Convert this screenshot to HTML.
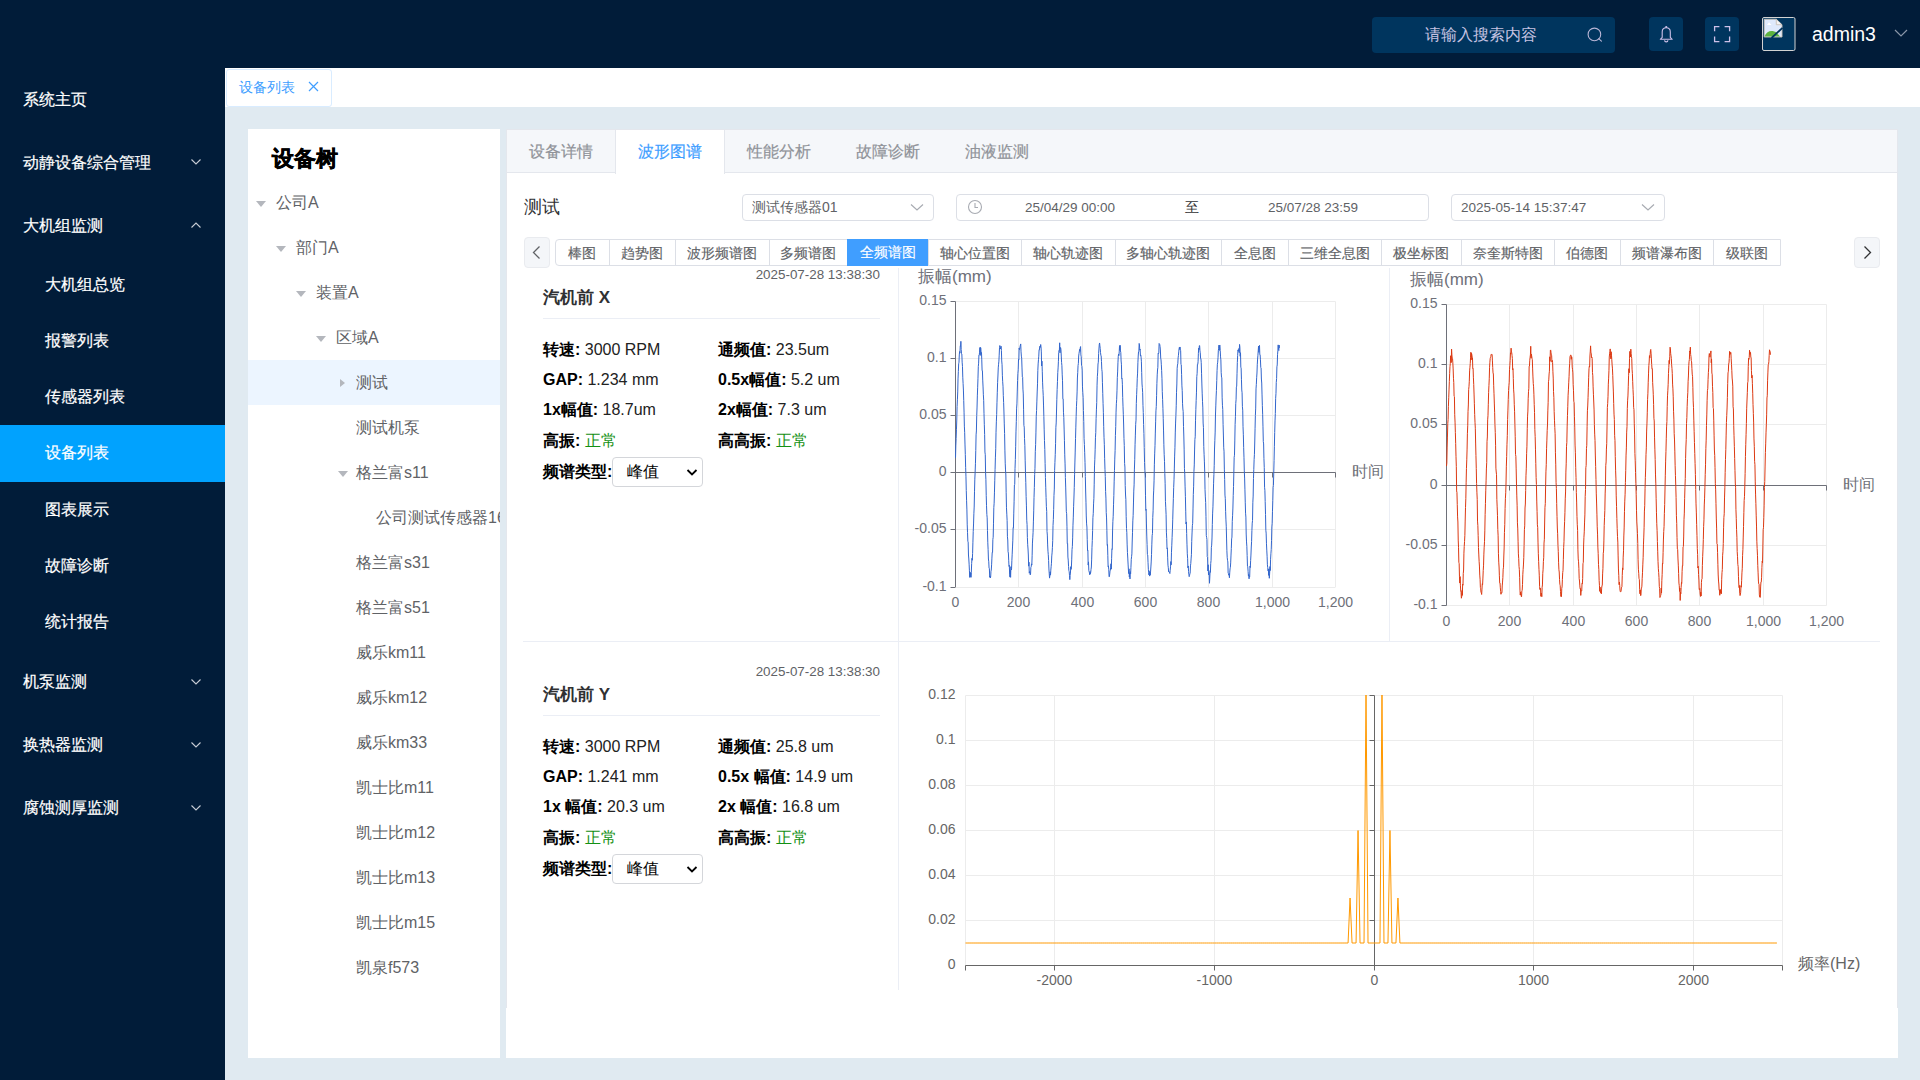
<!DOCTYPE html>
<html><head><meta charset="utf-8">
<style>
*{box-sizing:border-box;margin:0;padding:0}
html,body{width:1920px;height:1080px;overflow:hidden}
body{font-family:"Liberation Sans",sans-serif;background:#e0eaf1;position:relative;color:#303133}
.abs{position:absolute}
#hdr{left:0;top:0;width:1920px;height:68px;background:#011c39}
#side{left:0;top:68px;width:225px;height:1012px;background:#011c39}
.mi{position:absolute;left:23px;color:#fff;font-size:16px;line-height:20px;white-space:nowrap;-webkit-text-stroke:0.2px #fff}
.sub{left:45px}
.act{position:absolute;left:0;top:357px;width:225px;height:57px;background:#01a2fe}
.chev{position:absolute;left:191px;width:10px;height:6px}
#tagbar{left:225px;top:68px;width:1695px;height:39px;background:#fff}
#tree{left:248px;top:129px;width:252px;height:929px;background:#fff;overflow:hidden}
#main{left:506px;top:129px;width:1392px;height:929px;background:#fff;border:1px solid #e4e7ed}
.tn{position:absolute;font-size:16px;color:#606266;white-space:nowrap;line-height:20px}
.car{position:absolute;width:0;height:0}
.cd{border-left:5px solid transparent;border-right:5px solid transparent;border-top:6px solid #b4b7bd}
.cr{border-top:4px solid transparent;border-bottom:4px solid transparent;border-left:5px solid #b4b7bd}
</style></head><body>
<div id="hdr" class="abs">
  <div class="abs" style="left:1372px;top:17px;width:243px;height:36px;background:#00355e;border-radius:4px"></div>
  <div class="abs" style="left:1372px;top:17px;width:218px;height:35px;line-height:35px;text-align:center;color:#c6c3e2;font-size:16px">请输入搜索内容</div>
  <svg class="abs" style="left:1586px;top:26px" width="18" height="18" viewBox="0 0 18 18"><circle cx="8.4" cy="8.4" r="6.3" fill="none" stroke="#b9b6d6" stroke-width="1.1"/><path d="M12.8 12.6 L15.4 15.1" stroke="#b9b6d6" stroke-width="1.1" stroke-linecap="round"/></svg>
  <div class="abs" style="left:1649px;top:17px;width:34px;height:34px;background:#00355e;border-radius:4px"></div>
  <svg class="abs" style="left:1649px;top:17px" width="34" height="34" viewBox="0 0 34 34"><path d="M13.2 20.4 V14.9 C13.2 12.4 15 10.8 17.25 10.8 C19.5 10.8 21.3 12.4 21.3 14.9 V20.4 L23.2 22.3 H11.3 Z" fill="none" stroke="#cdc0e8" stroke-width="1.1" stroke-linejoin="round"/><circle cx="17.25" cy="10" r="1.1" fill="#cdc0e8"/><path d="M15.6 23.2 A1.65 1.65 0 0 0 18.9 23.2" fill="none" stroke="#cdc0e8" stroke-width="1.1"/></svg>
  <div class="abs" style="left:1705px;top:17px;width:34px;height:34px;background:#00355e;border-radius:4px"></div>
  <svg class="abs" style="left:1704px;top:16px" width="36" height="36" viewBox="0 0 36 36"><path d="M10.6 15.3 V10.6 H15.4 M20.6 10.6 H25.6 V15.3 M25.6 20.6 V25.6 H20.6 M15.4 25.6 H10.6 V20.6" fill="none" stroke="#cdc0e8" stroke-width="1.3"/></svg>
  <svg class="abs" style="left:1762px;top:17px" width="34" height="34" viewBox="0 0 34 34"><rect x="0.5" y="0.5" width="32.5" height="33" rx="1.5" fill="#00355e" stroke="#d2d2d2" stroke-width="1"/><path d="M2.2 2.2 H14.3 L20 7.7 V20 H2.2 Z" fill="#dfe9fb" stroke="#c8bfb6" stroke-width="0.9"/><path d="M5 8 L7 5.2 L9.5 8 Z" fill="#fff"/><path d="M2.6 19.6 C4 14 10 12.5 14.5 15.5 L18 19.6 Z" fill="#5db33f"/><path d="M14.3 2.4 V7.7 H19.8" fill="#f4f4f4" stroke="#c8bfb6" stroke-width="0.9"/><path d="M9.5 21 L20.5 10.8" stroke="#00355e" stroke-width="1.8"/></svg>
  <div class="abs" style="left:1812px;top:22px;color:#fff;font-size:19.5px;line-height:24px">admin3</div>
  <svg class="abs" style="left:1894px;top:29px" width="14" height="9" viewBox="0 0 14 9"><path d="M1 1 L7 7 L13 1" fill="none" stroke="#8a96a8" stroke-width="1.2"/></svg>
</div>
<div id="side" class="abs">
  <div class="act"></div>
  <div class="mi" style="top:22px">系统主页</div>
  <div class="mi" style="top:85px">动静设备综合管理</div>
  <svg class="chev" style="top:91px" viewBox="0 0 10 6"><path d="M0.5 0.5 L5 5 L9.5 0.5" fill="none" stroke="#c8cdd5" stroke-width="1.1"/></svg>
  <div class="mi" style="top:148px">大机组监测</div>
  <svg class="chev" style="top:153.5px" viewBox="0 0 10 6"><path d="M0.5 5.5 L5 1 L9.5 5.5" fill="none" stroke="#c8cdd5" stroke-width="1.1"/></svg>
  <div class="mi sub" style="top:207px">大机组总览</div>
  <div class="mi sub" style="top:263px">报警列表</div>
  <div class="mi sub" style="top:319px">传感器列表</div>
  <div class="mi sub" style="top:375px">设备列表</div>
  <div class="mi sub" style="top:432px">图表展示</div>
  <div class="mi sub" style="top:488px">故障诊断</div>
  <div class="mi sub" style="top:544px">统计报告</div>
  <div class="mi" style="top:604px">机泵监测</div>
  <svg class="chev" style="top:611px" viewBox="0 0 10 6"><path d="M0.5 0.5 L5 5 L9.5 0.5" fill="none" stroke="#c8cdd5" stroke-width="1.1"/></svg>
  <div class="mi" style="top:667px">换热器监测</div>
  <svg class="chev" style="top:674px" viewBox="0 0 10 6"><path d="M0.5 0.5 L5 5 L9.5 0.5" fill="none" stroke="#c8cdd5" stroke-width="1.1"/></svg>
  <div class="mi" style="top:730px">腐蚀测厚监测</div>
  <svg class="chev" style="top:737px" viewBox="0 0 10 6"><path d="M0.5 0.5 L5 5 L9.5 0.5" fill="none" stroke="#c8cdd5" stroke-width="1.1"/></svg>
</div>
<div id="tagbar" class="abs">
  <div class="abs" style="left:1px;top:1px;width:106px;height:38px;border:1px solid #d9ecff;border-radius:3px;background:#fff"></div>
  <div class="abs" style="left:14px;top:10px;color:#409eff;font-size:14px;line-height:18px">设备列表</div>
  <svg class="abs" style="left:83px;top:13px" width="11" height="11" viewBox="0 0 11 11"><path d="M1 1 L10 10 M10 1 L1 10" stroke="#409eff" stroke-width="1.2"/></svg>
</div>
<div id="tree" class="abs">
  <div class="abs" style="left:24px;top:17px;font-size:22px;font-weight:bold;color:#000;line-height:26px;-webkit-text-stroke:0.5px #000">设备树</div>
  <div class="abs" style="left:0;top:231px;width:252px;height:45px;background:#ecf5ff"></div>
  <div class="car cd" style="left:8px;top:72px"></div><div class="tn" style="left:28px;top:64px">公司A</div>
  <div class="car cd" style="left:28px;top:117px"></div><div class="tn" style="left:48px;top:109px">部门A</div>
  <div class="car cd" style="left:48px;top:162px"></div><div class="tn" style="left:68px;top:154px">装置A</div>
  <div class="car cd" style="left:68px;top:207px"></div><div class="tn" style="left:88px;top:199px">区域A</div>
  <div class="car cr" style="left:92px;top:250px"></div><div class="tn" style="left:108px;top:244px">测试</div>
  <div class="tn" style="left:108px;top:289px">测试机泵</div>
  <div class="car cd" style="left:90px;top:342px"></div><div class="tn" style="left:108px;top:334px">格兰富s11</div>
  <div class="tn" style="left:128px;top:379px">公司测试传感器16</div>
  <div class="tn" style="left:108px;top:424px">格兰富s31</div>
  <div class="tn" style="left:108px;top:469px">格兰富s51</div>
  <div class="tn" style="left:108px;top:514px">威乐km11</div>
  <div class="tn" style="left:108px;top:559px">威乐km12</div>
  <div class="tn" style="left:108px;top:604px">威乐km33</div>
  <div class="tn" style="left:108px;top:649px">凯士比m11</div>
  <div class="tn" style="left:108px;top:694px">凯士比m12</div>
  <div class="tn" style="left:108px;top:739px">凯士比m13</div>
  <div class="tn" style="left:108px;top:784px">凯士比m15</div>
  <div class="tn" style="left:108px;top:829px">凯泉f573</div>
</div>


<style>
.tx{position:absolute;white-space:nowrap}
.mt{position:absolute;top:130px;width:109px;height:43px;line-height:44px;text-align:center;font-size:16px;color:#909399;-webkit-text-stroke:0.2px currentColor}
.ct{position:absolute;top:240px;height:25px;line-height:26px;-webkit-text-stroke:0.15px currentColor;text-align:center;font-size:14px;color:#606266;border-left:1px solid #dcdfe6}
.inp{position:absolute;border:1px solid #dcdfe6;border-radius:4px;background:#fff}
.lab{position:absolute;font-size:16px;line-height:20px;color:#222;white-space:nowrap}
.lab b{color:#000}
.ok{color:#139013}
.sel{position:absolute;width:91px;height:30px;border:1px solid #d4d6da;border-radius:4px;background:#fff}
.al{font-size:14px;fill:#6e7079}
</style>

<div class="abs" style="left:506px;top:129px;width:1392px;height:879px;background:#fff;border:1px solid #e4e7ed;border-bottom:none"></div>
<div class="abs" style="left:506px;top:1008px;width:1392px;height:50px;background:#fff"></div>
<div class="abs" style="left:507px;top:130px;width:1390px;height:43px;background:#f5f7fa;border-bottom:1px solid #e4e7ed"></div>
<div class="abs" style="left:615px;top:130px;width:110px;height:44px;background:#fff;border-left:1px solid #e4e7ed;border-right:1px solid #e4e7ed"></div>
<div class="mt" style="left:506px;color:#909399">设备详情</div>
<div class="mt" style="left:615px;color:#409eff">波形图谱</div>
<div class="mt" style="left:724px;color:#909399">性能分析</div>
<div class="mt" style="left:833px;color:#909399">故障诊断</div>
<div class="mt" style="left:942px;color:#909399">油液监测</div>
<div class="tx" style="left:524px;top:196px;font-size:18px;line-height:22px;color:#303133">测试</div>
<div class="inp" style="left:742px;top:194px;width:192px;height:27px"></div>
<div class="tx" style="left:752px;top:199px;font-size:14px;line-height:17px;color:#606266">测试传感器01</div>
<svg class="abs" style="left:910px;top:203px" width="14" height="9" viewBox="0 0 14 9"><path d="M1 1.5 L7 7 L13 1.5" fill="none" stroke="#a8abb2" stroke-width="1.2"/></svg>
<div class="inp" style="left:956px;top:194px;width:473px;height:27px"></div>
<svg class="abs" style="left:967px;top:199px" width="16" height="16" viewBox="0 0 16 16"><circle cx="8" cy="8" r="6.5" fill="none" stroke="#a8abb2" stroke-width="1.1"/><path d="M8 4 V8.5 H11" fill="none" stroke="#a8abb2" stroke-width="1.1"/></svg>
<div class="tx" style="left:1000px;top:199px;width:140px;text-align:center;font-size:13.5px;line-height:17px;color:#606266">25/04/29 00:00</div>
<div class="tx" style="left:1185px;top:199px;font-size:14px;line-height:17px;color:#303133">至</div>
<div class="tx" style="left:1243px;top:199px;width:140px;text-align:center;font-size:13.5px;line-height:17px;color:#606266">25/07/28 23:59</div>
<div class="inp" style="left:1451px;top:194px;width:214px;height:27px"></div>
<div class="tx" style="left:1461px;top:199px;font-size:13.5px;line-height:17px;color:#606266">2025-05-14 15:37:47</div>
<svg class="abs" style="left:1641px;top:203px" width="14" height="9" viewBox="0 0 14 9"><path d="M1 1.5 L7 7 L13 1.5" fill="none" stroke="#a8abb2" stroke-width="1.2"/></svg>
<div class="abs" style="left:524px;top:237px;width:26px;height:31px;background:#f4f6f9;border:1px solid #e9ebef;border-radius:4px"></div>
<svg class="abs" style="left:530px;top:245px" width="14" height="15" viewBox="0 0 14 15"><path d="M9.5 1.5 L3.5 7.5 L9.5 13.5" fill="none" stroke="#606266" stroke-width="1.3"/></svg>
<div class="abs" style="left:1854px;top:237px;width:26px;height:31px;background:#f4f6f9;border:1px solid #e9ebef;border-radius:4px"></div>
<svg class="abs" style="left:1860px;top:245px" width="14" height="15" viewBox="0 0 14 15"><path d="M4.5 1.5 L10.5 7.5 L4.5 13.5" fill="none" stroke="#303133" stroke-width="1.3"/></svg>
<div class="abs" style="left:555px;top:239px;width:1226px;height:27px;border:1px solid #dcdfe6;border-radius:4px 0 0 4px"></div>
<div class="ct" style="left:555.5px;width:53px;border-left:none;">棒图</div>
<div class="ct" style="left:608.5px;width:66px;">趋势图</div>
<div class="ct" style="left:674.5px;width:94px;">波形频谱图</div>
<div class="ct" style="left:768.5px;width:78.5px;">多频谱图</div>
<div class="ct" style="left:847.0px;width:80.5px;background:#409eff;color:#fff;border-left:1px solid #409eff;top:239px;height:27px;line-height:27px">全频谱图</div>
<div class="ct" style="left:927.5px;width:93px;">轴心位置图</div>
<div class="ct" style="left:1020.5px;width:94px;">轴心轨迹图</div>
<div class="ct" style="left:1114.5px;width:106px;">多轴心轨迹图</div>
<div class="ct" style="left:1220.5px;width:67px;">全息图</div>
<div class="ct" style="left:1287.5px;width:93px;">三维全息图</div>
<div class="ct" style="left:1380.5px;width:80px;">极坐标图</div>
<div class="ct" style="left:1460.5px;width:93px;">奈奎斯特图</div>
<div class="ct" style="left:1553.5px;width:66px;">伯德图</div>
<div class="ct" style="left:1619.5px;width:93px;">频谱瀑布图</div>
<div class="ct" style="left:1712.5px;width:67px;">级联图</div>
<div class="abs" style="left:898px;top:268px;width:1px;height:373px;background:#ebeef5"></div>
<div class="abs" style="left:1389px;top:268px;width:1px;height:373px;background:#ebeef5"></div>
<div class="abs" style="left:523px;top:641px;width:1357px;height:1px;background:#ebeef5"></div>
<div class="abs" style="left:898px;top:642px;width:1px;height:348px;background:#ebeef5"></div>
<div class="tx" style="left:740px;top:266px;width:140px;text-align:right;font-size:13.4px;line-height:17px;color:#606266">2025-07-28 13:38:30</div>
<div class="tx" style="left:543px;top:287px;font-size:17px;line-height:21px;font-weight:bold;color:#303133">汽机前 X</div>
<div class="abs" style="left:543px;top:318px;width:337px;height:1px;background:#ebeef5"></div>
<div class="lab" style="left:543px;top:340px"><b>转速:</b> 3000 RPM</div>
<div class="lab" style="left:718px;top:340px"><b>通频值:</b> 23.5um</div>
<div class="lab" style="left:543px;top:370px"><b>GAP:</b> 1.234 mm</div>
<div class="lab" style="left:718px;top:370px"><b>0.5x幅值:</b> 5.2 um</div>
<div class="lab" style="left:543px;top:400px"><b>1x幅值:</b> 18.7um</div>
<div class="lab" style="left:718px;top:400px"><b>2x幅值:</b> 7.3 um</div>
<div class="lab" style="left:543px;top:431px"><b>高振:</b> <span class="ok">正常</span></div>
<div class="lab" style="left:718px;top:431px"><b>高高振:</b> <span class="ok">正常</span></div>
<div class="lab" style="left:543px;top:462px"><b>频谱类型:</b></div>
<div class="sel" style="left:612px;top:457px"></div>
<div class="tx" style="left:627px;top:462px;font-size:16px;line-height:20px;color:#000">峰值</div>
<svg class="abs" style="left:686px;top:468px" width="12" height="9" viewBox="0 0 12 9"><path d="M1.5 2 L6 6.5 L10.5 2" fill="none" stroke="#000" stroke-width="1.8"/></svg>
<div class="tx" style="left:740px;top:663px;width:140px;text-align:right;font-size:13.4px;line-height:17px;color:#606266">2025-07-28 13:38:30</div>
<div class="tx" style="left:543px;top:684px;font-size:17px;line-height:21px;font-weight:bold;color:#303133">汽机前 Y</div>
<div class="abs" style="left:543px;top:715px;width:337px;height:1px;background:#ebeef5"></div>
<div class="lab" style="left:543px;top:737px"><b>转速:</b> 3000 RPM</div>
<div class="lab" style="left:718px;top:737px"><b>通频值:</b> 25.8 um</div>
<div class="lab" style="left:543px;top:767px"><b>GAP:</b> 1.241 mm</div>
<div class="lab" style="left:718px;top:767px"><b>0.5x 幅值:</b> 14.9 um</div>
<div class="lab" style="left:543px;top:797px"><b>1x 幅值:</b> 20.3 um</div>
<div class="lab" style="left:718px;top:797px"><b>2x 幅值:</b> 16.8 um</div>
<div class="lab" style="left:543px;top:828px"><b>高振:</b> <span class="ok">正常</span></div>
<div class="lab" style="left:718px;top:828px"><b>高高振:</b> <span class="ok">正常</span></div>
<div class="lab" style="left:543px;top:859px"><b>频谱类型:</b></div>
<div class="sel" style="left:612px;top:854px"></div>
<div class="tx" style="left:627px;top:859px;font-size:16px;line-height:20px;color:#000">峰值</div>
<svg class="abs" style="left:686px;top:865px" width="12" height="9" viewBox="0 0 12 9"><path d="M1.5 2 L6 6.5 L10.5 2" fill="none" stroke="#000" stroke-width="1.8"/></svg>
<svg class="abs" style="left:0;top:0" width="1920" height="1080" viewBox="0 0 1920 1080"><line x1="955.5" y1="587.5" x2="1335.5" y2="587.5" stroke="#ececec" stroke-width="1"/><line x1="950.5" y1="587.5" x2="955.5" y2="587.5" stroke="#6e7079" stroke-width="1"/><text x="946.5" y="591.0" text-anchor="end" class="al">-0.1</text><line x1="955.5" y1="529.5" x2="1335.5" y2="529.5" stroke="#ececec" stroke-width="1"/><line x1="950.5" y1="529.5" x2="955.5" y2="529.5" stroke="#6e7079" stroke-width="1"/><text x="946.5" y="533.0" text-anchor="end" class="al">-0.05</text><line x1="955.5" y1="472.5" x2="1335.5" y2="472.5" stroke="#ececec" stroke-width="1"/><line x1="950.5" y1="472.5" x2="955.5" y2="472.5" stroke="#6e7079" stroke-width="1"/><text x="946.5" y="476.0" text-anchor="end" class="al">0</text><line x1="955.5" y1="415.5" x2="1335.5" y2="415.5" stroke="#ececec" stroke-width="1"/><line x1="950.5" y1="415.5" x2="955.5" y2="415.5" stroke="#6e7079" stroke-width="1"/><text x="946.5" y="419.0" text-anchor="end" class="al">0.05</text><line x1="955.5" y1="358.5" x2="1335.5" y2="358.5" stroke="#ececec" stroke-width="1"/><line x1="950.5" y1="358.5" x2="955.5" y2="358.5" stroke="#6e7079" stroke-width="1"/><text x="946.5" y="362.0" text-anchor="end" class="al">0.1</text><line x1="955.5" y1="301.5" x2="1335.5" y2="301.5" stroke="#ececec" stroke-width="1"/><line x1="950.5" y1="301.5" x2="955.5" y2="301.5" stroke="#6e7079" stroke-width="1"/><text x="946.5" y="305.0" text-anchor="end" class="al">0.15</text><line x1="1018.5" y1="301.5" x2="1018.5" y2="587" stroke="#ececec" stroke-width="1"/><line x1="1082.5" y1="301.5" x2="1082.5" y2="587" stroke="#ececec" stroke-width="1"/><line x1="1145.5" y1="301.5" x2="1145.5" y2="587" stroke="#ececec" stroke-width="1"/><line x1="1208.5" y1="301.5" x2="1208.5" y2="587" stroke="#ececec" stroke-width="1"/><line x1="1272.5" y1="301.5" x2="1272.5" y2="587" stroke="#ececec" stroke-width="1"/><line x1="1335.5" y1="301.5" x2="1335.5" y2="587" stroke="#ececec" stroke-width="1"/><line x1="955.5" y1="301.5" x2="955.5" y2="587" stroke="#6e7079" stroke-width="1"/><line x1="955.5" y1="472.5" x2="1335.5" y2="472.5" stroke="#6e7079" stroke-width="1"/><line x1="955.5" y1="472.5" x2="955.5" y2="477.5" stroke="#6e7079" stroke-width="1"/><text x="955.5" y="607.0" text-anchor="middle" class="al">0</text><line x1="1018.5" y1="472.5" x2="1018.5" y2="477.5" stroke="#6e7079" stroke-width="1"/><text x="1018.5" y="607.0" text-anchor="middle" class="al">200</text><line x1="1082.5" y1="472.5" x2="1082.5" y2="477.5" stroke="#6e7079" stroke-width="1"/><text x="1082.5" y="607.0" text-anchor="middle" class="al">400</text><line x1="1145.5" y1="472.5" x2="1145.5" y2="477.5" stroke="#6e7079" stroke-width="1"/><text x="1145.5" y="607.0" text-anchor="middle" class="al">600</text><line x1="1208.5" y1="472.5" x2="1208.5" y2="477.5" stroke="#6e7079" stroke-width="1"/><text x="1208.5" y="607.0" text-anchor="middle" class="al">800</text><line x1="1272.5" y1="472.5" x2="1272.5" y2="477.5" stroke="#6e7079" stroke-width="1"/><text x="1272.5" y="607.0" text-anchor="middle" class="al">1,000</text><line x1="1335.5" y1="472.5" x2="1335.5" y2="477.5" stroke="#6e7079" stroke-width="1"/><text x="1335.5" y="607.0" text-anchor="middle" class="al">1,200</text><polyline fill="none" stroke="#3366cc" stroke-width="1" points="955.50,457.70 955.82,445.84 956.13,438.51 956.45,429.82 956.77,420.04 957.08,406.55 957.40,399.83 957.72,391.93 958.03,378.91 958.35,371.56 958.67,363.74 958.98,362.23 959.30,354.94 959.62,351.54 959.93,353.15 960.25,345.93 960.57,346.31 960.88,341.30 961.20,349.57 961.52,353.71 961.83,353.99 962.15,362.20 962.47,366.41 962.78,377.21 963.10,383.56 963.42,390.04 963.73,400.45 964.05,412.13 964.37,426.13 964.68,432.69 965.00,444.95 965.32,454.47 965.63,467.32 965.95,476.18 966.27,490.60 966.58,500.75 966.90,509.91 967.22,524.89 967.53,532.30 967.85,541.26 968.17,542.07 968.48,555.01 968.80,558.98 969.12,564.18 969.43,570.81 969.75,577.41 970.07,572.09 970.38,576.73 970.70,573.11 971.02,577.33 971.33,572.19 971.65,563.58 971.97,558.27 972.28,560.24 972.60,553.55 972.92,542.21 973.23,531.53 973.55,523.97 973.87,513.74 974.18,507.08 974.50,491.80 974.82,479.19 975.13,472.32 975.45,463.76 975.77,450.45 976.08,434.85 976.40,430.96 976.72,415.61 977.03,407.98 977.35,395.88 977.67,387.22 977.98,378.25 978.30,366.60 978.62,363.19 978.93,355.05 979.25,354.75 979.57,352.28 979.88,347.49 980.20,355.46 980.52,347.40 980.83,347.90 981.15,354.08 981.47,352.53 981.78,359.83 982.10,370.66 982.42,370.63 982.73,380.11 983.05,386.94 983.37,394.78 983.68,400.34 984.00,413.75 984.32,424.74 984.63,434.52 984.95,452.04 985.27,454.70 985.58,472.72 985.90,479.72 986.22,495.32 986.53,505.72 986.85,514.47 987.17,517.82 987.48,530.51 987.80,542.79 988.12,549.64 988.43,559.01 988.75,561.77 989.07,568.26 989.38,568.46 989.70,577.21 990.02,575.98 990.33,577.98 990.65,577.05 990.97,571.25 991.28,570.08 991.60,564.84 991.92,558.14 992.23,552.28 992.55,552.56 992.87,539.33 993.18,537.31 993.50,523.17 993.82,507.61 994.13,503.22 994.45,492.89 994.77,480.21 995.08,469.31 995.40,457.88 995.72,448.74 996.03,432.26 996.35,421.85 996.67,414.39 996.98,402.76 997.30,392.24 997.62,382.29 997.93,376.01 998.25,367.87 998.57,364.25 998.88,361.17 999.20,355.18 999.52,347.58 999.83,345.53 1000.15,346.86 1000.47,349.00 1000.78,347.74 1001.10,346.23 1001.42,350.58 1001.73,360.93 1002.05,364.66 1002.37,375.21 1002.68,381.73 1003.00,386.20 1003.32,395.67 1003.63,402.64 1003.95,411.99 1004.27,423.90 1004.58,433.53 1004.90,450.13 1005.22,463.18 1005.53,469.93 1005.85,475.01 1006.17,492.73 1006.48,507.81 1006.80,514.17 1007.12,520.59 1007.43,536.79 1007.75,539.99 1008.07,551.67 1008.38,553.05 1008.70,560.24 1009.02,566.41 1009.33,565.31 1009.65,574.83 1009.97,577.14 1010.28,570.27 1010.60,577.31 1010.92,566.64 1011.23,570.03 1011.55,568.79 1011.87,560.71 1012.18,554.21 1012.50,546.96 1012.82,540.17 1013.13,527.84 1013.45,528.16 1013.77,513.14 1014.08,501.81 1014.40,484.98 1014.72,484.69 1015.03,468.63 1015.35,459.51 1015.67,446.78 1015.98,431.86 1016.30,421.60 1016.62,408.12 1016.93,403.90 1017.25,391.97 1017.57,380.62 1017.88,373.40 1018.20,369.80 1018.52,359.40 1018.83,360.03 1019.15,348.05 1019.47,349.65 1019.78,348.41 1020.10,346.45 1020.42,345.07 1020.73,343.93 1021.05,351.84 1021.37,356.11 1021.68,358.08 1022.00,367.94 1022.32,376.96 1022.63,377.29 1022.95,389.13 1023.27,393.93 1023.58,409.83 1023.90,425.45 1024.22,427.11 1024.53,438.54 1024.85,445.70 1025.17,460.16 1025.48,472.18 1025.80,482.67 1026.12,496.44 1026.43,505.88 1026.75,520.23 1027.07,524.60 1027.38,537.45 1027.70,544.76 1028.02,549.00 1028.33,555.00 1028.65,566.14 1028.97,562.19 1029.28,573.17 1029.60,571.57 1029.92,572.59 1030.23,574.88 1030.55,574.11 1030.87,567.41 1031.18,566.83 1031.50,563.86 1031.82,565.06 1032.13,555.72 1032.45,543.08 1032.77,537.81 1033.08,532.29 1033.40,521.91 1033.72,510.88 1034.03,497.49 1034.35,487.41 1034.67,474.46 1034.98,468.28 1035.30,451.72 1035.62,444.62 1035.93,432.88 1036.25,416.21 1036.57,410.48 1036.88,401.13 1037.20,391.98 1037.52,383.82 1037.83,370.40 1038.15,363.92 1038.47,359.73 1038.78,356.17 1039.10,349.69 1039.42,349.94 1039.73,346.59 1040.05,346.04 1040.37,347.38 1040.68,344.50 1041.00,346.89 1041.32,351.92 1041.63,366.00 1041.95,361.15 1042.27,371.19 1042.58,382.17 1042.90,389.44 1043.22,395.32 1043.53,405.05 1043.85,416.33 1044.17,429.15 1044.48,440.56 1044.80,449.60 1045.12,463.64 1045.43,477.33 1045.75,487.80 1046.07,497.42 1046.38,506.72 1046.70,511.40 1047.02,531.40 1047.33,535.09 1047.65,544.93 1047.97,551.19 1048.28,554.66 1048.60,560.49 1048.92,568.96 1049.23,573.52 1049.55,578.12 1049.87,575.62 1050.18,571.90 1050.50,575.12 1050.82,570.13 1051.13,566.78 1051.45,563.27 1051.77,555.88 1052.08,552.89 1052.40,547.61 1052.72,540.44 1053.03,525.54 1053.35,519.64 1053.67,509.34 1053.98,495.45 1054.30,489.10 1054.62,470.56 1054.93,462.33 1055.25,454.33 1055.57,443.31 1055.88,427.29 1056.20,422.94 1056.52,411.00 1056.83,399.27 1057.15,389.46 1057.47,381.45 1057.78,372.64 1058.10,367.91 1058.42,361.29 1058.73,352.41 1059.05,350.31 1059.37,350.65 1059.68,342.81 1060.00,352.86 1060.32,347.55 1060.63,347.63 1060.95,349.63 1061.27,356.04 1061.58,362.46 1061.90,365.69 1062.22,374.85 1062.53,380.75 1062.85,398.86 1063.17,398.92 1063.48,412.19 1063.80,417.67 1064.12,429.07 1064.43,440.27 1064.75,454.83 1065.07,463.85 1065.38,477.44 1065.70,487.07 1066.02,499.03 1066.33,511.72 1066.65,513.70 1066.97,526.81 1067.28,543.60 1067.60,543.27 1067.92,557.06 1068.23,560.08 1068.55,566.43 1068.87,570.62 1069.18,571.66 1069.50,575.41 1069.82,579.63 1070.13,575.38 1070.45,573.06 1070.77,566.66 1071.08,569.40 1071.40,567.05 1071.72,559.16 1072.03,549.66 1072.35,546.60 1072.67,537.86 1072.98,525.20 1073.30,517.15 1073.62,506.25 1073.93,498.00 1074.25,487.54 1074.57,474.84 1074.88,462.96 1075.20,452.07 1075.52,438.59 1075.83,427.17 1076.15,416.41 1076.47,406.28 1076.78,400.39 1077.10,391.90 1077.42,377.99 1077.73,372.62 1078.05,365.58 1078.37,363.46 1078.68,355.98 1079.00,353.48 1079.32,351.52 1079.63,349.35 1079.95,351.47 1080.27,347.74 1080.58,346.57 1080.90,354.95 1081.22,356.77 1081.53,365.31 1081.85,366.42 1082.17,370.09 1082.48,386.87 1082.80,392.71 1083.12,397.40 1083.43,410.41 1083.75,421.64 1084.07,438.69 1084.38,444.47 1084.70,452.77 1085.02,462.70 1085.33,476.33 1085.65,491.00 1085.97,502.22 1086.28,515.98 1086.60,523.88 1086.92,527.04 1087.23,539.32 1087.55,550.79 1087.87,550.32 1088.18,565.06 1088.50,561.89 1088.82,570.57 1089.13,571.77 1089.45,572.77 1089.77,574.80 1090.08,571.62 1090.40,573.77 1090.72,572.19 1091.03,569.49 1091.35,567.00 1091.67,559.13 1091.98,547.66 1092.30,540.53 1092.62,530.52 1092.93,517.59 1093.25,513.58 1093.57,503.88 1093.88,498.33 1094.20,484.19 1094.52,465.94 1094.83,459.30 1095.15,449.81 1095.47,437.26 1095.78,432.51 1096.10,418.78 1096.42,409.88 1096.73,402.55 1097.05,385.20 1097.37,376.32 1097.68,372.09 1098.00,364.01 1098.32,362.24 1098.63,353.46 1098.95,349.02 1099.27,344.37 1099.58,342.97 1099.90,345.85 1100.22,348.56 1100.53,352.64 1100.85,355.21 1101.17,355.99 1101.48,361.44 1101.80,369.29 1102.12,371.80 1102.43,382.75 1102.75,393.38 1103.07,403.47 1103.38,412.79 1103.70,426.29 1104.02,437.32 1104.33,444.74 1104.65,458.77 1104.97,469.28 1105.28,476.37 1105.60,491.56 1105.92,498.12 1106.23,512.34 1106.55,517.94 1106.87,530.28 1107.18,545.26 1107.50,544.56 1107.82,555.67 1108.13,566.73 1108.45,565.85 1108.77,569.74 1109.08,576.79 1109.40,576.64 1109.72,574.01 1110.03,571.07 1110.35,570.24 1110.67,567.28 1110.98,563.76 1111.30,569.18 1111.62,558.28 1111.93,548.85 1112.25,549.35 1112.57,530.97 1112.88,521.40 1113.20,516.31 1113.52,504.81 1113.83,495.61 1114.15,481.87 1114.47,470.62 1114.78,459.12 1115.10,450.63 1115.42,435.36 1115.73,426.44 1116.05,412.11 1116.37,403.76 1116.68,399.28 1117.00,390.22 1117.32,377.70 1117.63,371.93 1117.95,362.75 1118.27,356.30 1118.58,354.09 1118.90,355.58 1119.22,351.89 1119.53,345.70 1119.85,350.31 1120.17,345.27 1120.48,350.95 1120.80,352.57 1121.12,361.00 1121.43,364.22 1121.75,378.82 1122.07,378.30 1122.38,384.24 1122.70,397.37 1123.02,406.81 1123.33,414.72 1123.65,425.01 1123.97,438.49 1124.28,445.50 1124.60,463.51 1124.92,467.04 1125.23,485.55 1125.55,495.01 1125.87,499.66 1126.18,516.69 1126.50,528.43 1126.82,532.73 1127.13,544.10 1127.45,552.39 1127.77,558.05 1128.08,564.07 1128.40,569.63 1128.72,573.63 1129.03,568.84 1129.35,577.00 1129.67,572.80 1129.98,578.95 1130.30,571.61 1130.62,573.84 1130.93,567.60 1131.25,559.45 1131.57,556.75 1131.88,553.89 1132.20,542.03 1132.52,532.28 1132.83,520.87 1133.15,515.43 1133.47,502.98 1133.78,491.10 1134.10,484.84 1134.42,469.10 1134.73,459.75 1135.05,444.76 1135.37,435.11 1135.68,424.32 1136.00,420.16 1136.32,403.48 1136.63,394.71 1136.95,387.51 1137.27,378.20 1137.58,373.12 1137.90,362.70 1138.22,355.99 1138.53,351.87 1138.85,351.83 1139.17,343.44 1139.48,344.82 1139.80,350.12 1140.12,349.10 1140.43,355.78 1140.75,354.99 1141.07,357.20 1141.38,361.22 1141.70,372.61 1142.02,383.99 1142.33,387.66 1142.65,392.32 1142.97,405.48 1143.28,412.49 1143.60,424.46 1143.92,433.41 1144.23,447.42 1144.55,462.42 1144.87,470.65 1145.18,475.98 1145.50,495.78 1145.82,510.35 1146.13,509.36 1146.45,523.97 1146.77,536.06 1147.08,544.42 1147.40,554.68 1147.72,554.98 1148.03,562.34 1148.35,569.30 1148.67,572.38 1148.98,574.98 1149.30,572.18 1149.62,576.08 1149.93,570.80 1150.25,575.19 1150.57,571.49 1150.88,566.98 1151.20,561.96 1151.52,554.51 1151.83,544.23 1152.15,535.75 1152.47,533.54 1152.78,517.41 1153.10,510.77 1153.42,495.99 1153.73,490.11 1154.05,480.83 1154.37,464.83 1154.68,453.89 1155.00,445.63 1155.32,433.07 1155.63,421.86 1155.95,410.83 1156.27,406.60 1156.58,395.73 1156.90,383.40 1157.22,374.86 1157.53,370.00 1157.85,367.36 1158.17,353.32 1158.48,353.90 1158.80,352.95 1159.12,343.47 1159.43,343.97 1159.75,344.57 1160.07,346.62 1160.38,349.96 1160.70,358.05 1161.02,359.93 1161.33,364.75 1161.65,370.67 1161.97,378.72 1162.28,391.36 1162.60,399.35 1162.92,408.35 1163.23,418.27 1163.55,430.95 1163.87,444.74 1164.18,454.31 1164.50,461.36 1164.82,473.66 1165.13,483.24 1165.45,501.32 1165.77,507.81 1166.08,514.32 1166.40,532.15 1166.72,538.68 1167.03,548.63 1167.35,547.89 1167.67,557.83 1167.98,565.16 1168.30,567.68 1168.62,571.89 1168.93,571.47 1169.25,572.01 1169.57,572.89 1169.88,573.54 1170.20,570.23 1170.52,566.87 1170.83,561.56 1171.15,564.80 1171.47,552.26 1171.78,545.79 1172.10,537.49 1172.42,529.82 1172.73,519.80 1173.05,508.08 1173.37,498.35 1173.68,487.60 1174.00,479.81 1174.32,468.96 1174.63,456.10 1174.95,447.72 1175.27,432.95 1175.58,423.05 1175.90,415.31 1176.22,405.79 1176.53,392.27 1176.85,383.97 1177.17,368.27 1177.48,365.05 1177.80,363.73 1178.12,357.90 1178.43,355.38 1178.75,351.85 1179.07,348.83 1179.38,347.32 1179.70,349.46 1180.02,346.97 1180.33,350.23 1180.65,350.33 1180.97,364.55 1181.28,364.78 1181.60,374.63 1181.92,385.87 1182.23,390.67 1182.55,403.74 1182.87,408.99 1183.18,411.48 1183.50,426.38 1183.82,436.02 1184.13,449.13 1184.45,468.37 1184.77,474.15 1185.08,486.17 1185.40,496.32 1185.72,511.16 1186.03,524.02 1186.35,521.94 1186.67,533.47 1186.98,544.18 1187.30,553.79 1187.62,558.30 1187.93,567.82 1188.25,565.97 1188.57,571.60 1188.88,574.75 1189.20,576.67 1189.52,575.62 1189.83,573.90 1190.15,573.15 1190.47,565.86 1190.78,563.56 1191.10,558.94 1191.42,554.68 1191.73,541.38 1192.05,532.96 1192.37,525.75 1192.68,523.37 1193.00,508.93 1193.32,494.46 1193.63,486.19 1193.95,471.40 1194.27,464.92 1194.58,449.98 1194.90,439.44 1195.22,436.81 1195.53,420.19 1195.85,409.34 1196.17,400.60 1196.48,392.14 1196.80,376.55 1197.12,373.72 1197.43,364.30 1197.75,364.50 1198.07,361.74 1198.38,353.34 1198.70,348.10 1199.02,349.72 1199.33,345.67 1199.65,345.56 1199.97,350.94 1200.28,352.75 1200.60,358.69 1200.92,358.55 1201.23,362.63 1201.55,373.25 1201.87,383.96 1202.18,393.17 1202.50,401.29 1202.82,407.90 1203.13,423.06 1203.45,427.53 1203.77,446.40 1204.08,454.27 1204.40,461.90 1204.72,471.94 1205.03,489.40 1205.35,496.92 1205.67,502.53 1205.98,516.50 1206.30,535.59 1206.62,537.35 1206.93,539.42 1207.25,556.73 1207.57,557.10 1207.88,570.97 1208.20,564.75 1208.52,574.88 1208.83,572.25 1209.15,572.91 1209.47,583.27 1209.78,578.09 1210.10,570.62 1210.42,572.36 1210.73,563.45 1211.05,560.47 1211.37,547.34 1211.68,545.13 1212.00,537.98 1212.32,524.48 1212.63,513.13 1212.95,506.81 1213.27,494.86 1213.58,483.21 1213.90,474.76 1214.22,465.34 1214.53,449.03 1214.85,440.27 1215.17,432.09 1215.48,415.01 1215.80,405.90 1216.12,396.98 1216.43,390.42 1216.75,380.51 1217.07,370.56 1217.38,364.23 1217.70,362.24 1218.02,357.74 1218.33,350.53 1218.65,348.42 1218.97,345.09 1219.28,350.52 1219.60,345.42 1219.92,344.99 1220.23,350.40 1220.55,356.90 1220.87,359.89 1221.18,372.35 1221.50,377.06 1221.82,377.88 1222.13,397.18 1222.45,405.25 1222.77,409.63 1223.08,424.38 1223.40,435.02 1223.72,447.80 1224.03,451.16 1224.35,469.11 1224.67,479.52 1224.98,495.08 1225.30,498.60 1225.62,511.32 1225.93,519.87 1226.25,526.19 1226.57,538.98 1226.88,550.75 1227.20,557.31 1227.52,560.33 1227.83,561.95 1228.15,573.25 1228.47,573.56 1228.78,575.19 1229.10,573.68 1229.42,577.75 1229.73,572.82 1230.05,568.86 1230.37,567.49 1230.68,562.90 1231.00,555.07 1231.32,548.44 1231.63,538.89 1231.95,537.14 1232.27,521.39 1232.58,515.76 1232.90,508.04 1233.22,495.61 1233.53,486.46 1233.85,472.21 1234.17,457.29 1234.48,455.27 1234.80,440.96 1235.12,424.36 1235.43,416.73 1235.75,403.38 1236.07,399.77 1236.38,387.11 1236.70,386.13 1237.02,373.65 1237.33,362.58 1237.65,355.64 1237.97,349.89 1238.28,351.21 1238.60,351.17 1238.92,348.50 1239.23,352.74 1239.55,344.41 1239.87,347.05 1240.18,356.26 1240.50,352.76 1240.82,367.21 1241.13,368.09 1241.45,379.24 1241.77,389.99 1242.08,392.76 1242.40,406.73 1242.72,410.12 1243.03,426.68 1243.35,434.77 1243.67,447.66 1243.98,457.28 1244.30,470.89 1244.62,478.07 1244.93,489.81 1245.25,502.20 1245.57,513.19 1245.88,517.12 1246.20,534.04 1246.52,541.91 1246.83,546.26 1247.15,555.43 1247.47,566.07 1247.78,566.81 1248.10,571.45 1248.42,576.06 1248.73,574.41 1249.05,578.82 1249.37,575.77 1249.68,576.63 1250.00,566.15 1250.32,567.54 1250.63,560.55 1250.95,555.07 1251.27,547.00 1251.58,541.70 1251.90,530.57 1252.22,523.11 1252.53,520.58 1252.85,502.31 1253.17,496.07 1253.48,478.55 1253.80,469.31 1254.12,459.59 1254.43,454.35 1254.75,442.01 1255.07,428.29 1255.38,415.39 1255.70,408.10 1256.02,388.91 1256.33,384.36 1256.65,377.77 1256.97,373.01 1257.28,364.76 1257.60,359.04 1257.92,355.22 1258.23,350.85 1258.55,346.10 1258.87,352.33 1259.18,346.70 1259.50,345.38 1259.82,354.74 1260.13,354.79 1260.45,359.82 1260.77,367.50 1261.08,368.00 1261.40,379.03 1261.72,383.04 1262.03,394.10 1262.35,405.70 1262.67,414.27 1262.98,426.81 1263.30,441.43 1263.62,443.94 1263.93,458.34 1264.25,467.49 1264.57,487.27 1264.88,490.22 1265.20,501.64 1265.52,514.47 1265.83,530.24 1266.15,533.11 1266.47,543.79 1266.78,550.11 1267.10,556.21 1267.42,564.80 1267.73,567.44 1268.05,570.82 1268.37,569.38 1268.68,575.42 1269.00,568.86 1269.32,578.25 1269.63,573.43 1269.95,566.56 1270.27,570.55 1270.58,559.22 1270.90,553.79 1271.22,549.63 1271.53,540.72 1271.85,526.96 1272.17,523.31 1272.48,511.27 1272.80,500.36 1273.12,487.28 1273.43,485.47 1273.75,472.43 1274.07,460.64 1274.38,446.25 1274.70,432.49 1275.02,420.93 1275.33,413.57 1275.65,398.36 1275.97,393.41 1276.28,382.42 1276.60,378.53 1276.92,366.80 1277.23,364.96 1277.55,354.32 1277.87,350.92 1278.18,344.88 1278.50,349.38 1278.82,350.55 1279.13,345.08 1279.45,347.89"/><text x="918" y="282" style="font-size:17px;fill:#6e7079">振幅(mm)</text><text x="1352" y="477" style="font-size:16px;fill:#6e7079">时间</text></svg>
<svg class="abs" style="left:0;top:0" width="1920" height="1080" viewBox="0 0 1920 1080"><line x1="1446.5" y1="605.5" x2="1826.5" y2="605.5" stroke="#ececec" stroke-width="1"/><line x1="1441.5" y1="605.5" x2="1446.5" y2="605.5" stroke="#6e7079" stroke-width="1"/><text x="1437.5" y="609.0" text-anchor="end" class="al">-0.1</text><line x1="1446.5" y1="545.5" x2="1826.5" y2="545.5" stroke="#ececec" stroke-width="1"/><line x1="1441.5" y1="545.5" x2="1446.5" y2="545.5" stroke="#6e7079" stroke-width="1"/><text x="1437.5" y="549.0" text-anchor="end" class="al">-0.05</text><line x1="1446.5" y1="485.5" x2="1826.5" y2="485.5" stroke="#ececec" stroke-width="1"/><line x1="1441.5" y1="485.5" x2="1446.5" y2="485.5" stroke="#6e7079" stroke-width="1"/><text x="1437.5" y="489.0" text-anchor="end" class="al">0</text><line x1="1446.5" y1="424.5" x2="1826.5" y2="424.5" stroke="#ececec" stroke-width="1"/><line x1="1441.5" y1="424.5" x2="1446.5" y2="424.5" stroke="#6e7079" stroke-width="1"/><text x="1437.5" y="428.0" text-anchor="end" class="al">0.05</text><line x1="1446.5" y1="364.5" x2="1826.5" y2="364.5" stroke="#ececec" stroke-width="1"/><line x1="1441.5" y1="364.5" x2="1446.5" y2="364.5" stroke="#6e7079" stroke-width="1"/><text x="1437.5" y="368.0" text-anchor="end" class="al">0.1</text><line x1="1446.5" y1="304.5" x2="1826.5" y2="304.5" stroke="#ececec" stroke-width="1"/><line x1="1441.5" y1="304.5" x2="1446.5" y2="304.5" stroke="#6e7079" stroke-width="1"/><text x="1437.5" y="308.0" text-anchor="end" class="al">0.15</text><line x1="1509.5" y1="304.5" x2="1509.5" y2="605.5" stroke="#ececec" stroke-width="1"/><line x1="1573.5" y1="304.5" x2="1573.5" y2="605.5" stroke="#ececec" stroke-width="1"/><line x1="1636.5" y1="304.5" x2="1636.5" y2="605.5" stroke="#ececec" stroke-width="1"/><line x1="1699.5" y1="304.5" x2="1699.5" y2="605.5" stroke="#ececec" stroke-width="1"/><line x1="1763.5" y1="304.5" x2="1763.5" y2="605.5" stroke="#ececec" stroke-width="1"/><line x1="1826.5" y1="304.5" x2="1826.5" y2="605.5" stroke="#ececec" stroke-width="1"/><line x1="1446.5" y1="304.5" x2="1446.5" y2="605.5" stroke="#6e7079" stroke-width="1"/><line x1="1446.5" y1="485.5" x2="1826.5" y2="485.5" stroke="#6e7079" stroke-width="1"/><line x1="1446.5" y1="485.5" x2="1446.5" y2="490.5" stroke="#6e7079" stroke-width="1"/><text x="1446.5" y="625.5" text-anchor="middle" class="al">0</text><line x1="1509.5" y1="485.5" x2="1509.5" y2="490.5" stroke="#6e7079" stroke-width="1"/><text x="1509.5" y="625.5" text-anchor="middle" class="al">200</text><line x1="1573.5" y1="485.5" x2="1573.5" y2="490.5" stroke="#6e7079" stroke-width="1"/><text x="1573.5" y="625.5" text-anchor="middle" class="al">400</text><line x1="1636.5" y1="485.5" x2="1636.5" y2="490.5" stroke="#6e7079" stroke-width="1"/><text x="1636.5" y="625.5" text-anchor="middle" class="al">600</text><line x1="1699.5" y1="485.5" x2="1699.5" y2="490.5" stroke="#6e7079" stroke-width="1"/><text x="1699.5" y="625.5" text-anchor="middle" class="al">800</text><line x1="1763.5" y1="485.5" x2="1763.5" y2="490.5" stroke="#6e7079" stroke-width="1"/><text x="1763.5" y="625.5" text-anchor="middle" class="al">1,000</text><line x1="1826.5" y1="485.5" x2="1826.5" y2="490.5" stroke="#6e7079" stroke-width="1"/><text x="1826.5" y="625.5" text-anchor="middle" class="al">1,200</text><polyline fill="none" stroke="#dc3912" stroke-width="1" points="1446.50,466.02 1446.82,463.04 1447.13,447.96 1447.45,437.05 1447.77,423.67 1448.08,419.57 1448.40,406.34 1448.72,397.78 1449.03,389.94 1449.35,381.31 1449.67,373.31 1449.98,366.64 1450.30,363.59 1450.62,355.79 1450.93,356.07 1451.25,362.59 1451.57,349.13 1451.88,354.84 1452.20,358.03 1452.52,358.30 1452.83,362.86 1453.15,368.93 1453.47,378.24 1453.78,382.65 1454.10,396.30 1454.42,396.59 1454.73,414.73 1455.05,422.14 1455.37,432.58 1455.68,443.50 1456.00,456.71 1456.32,466.49 1456.63,490.92 1456.95,492.64 1457.27,504.58 1457.58,516.88 1457.90,522.01 1458.22,540.07 1458.53,547.26 1458.85,562.29 1459.17,563.66 1459.48,576.80 1459.80,583.07 1460.12,576.57 1460.43,585.85 1460.75,591.14 1461.07,592.56 1461.38,598.22 1461.70,596.61 1462.02,590.49 1462.33,595.40 1462.65,584.17 1462.97,585.19 1463.28,573.40 1463.60,570.01 1463.92,553.19 1464.23,546.51 1464.55,541.50 1464.87,535.34 1465.18,521.06 1465.50,507.47 1465.82,498.63 1466.13,482.81 1466.45,468.63 1466.77,459.81 1467.08,449.10 1467.40,433.78 1467.72,425.83 1468.03,411.57 1468.35,404.98 1468.67,389.60 1468.98,386.71 1469.30,381.29 1469.62,370.90 1469.93,367.30 1470.25,363.48 1470.57,357.37 1470.88,352.22 1471.20,359.85 1471.52,353.30 1471.83,354.75 1472.15,357.05 1472.47,357.63 1472.78,368.69 1473.10,368.37 1473.42,377.82 1473.73,384.47 1474.05,394.06 1474.37,403.77 1474.68,414.44 1475.00,422.26 1475.32,428.26 1475.63,443.04 1475.95,455.49 1476.27,468.38 1476.58,483.57 1476.90,492.20 1477.22,499.44 1477.53,521.10 1477.85,525.61 1478.17,535.47 1478.48,547.48 1478.80,554.95 1479.12,561.29 1479.43,566.04 1479.75,575.08 1480.07,579.21 1480.38,587.36 1480.70,588.80 1481.02,592.57 1481.33,592.78 1481.65,594.47 1481.97,589.16 1482.28,583.82 1482.60,584.58 1482.92,578.07 1483.23,570.64 1483.55,565.17 1483.87,554.16 1484.18,547.18 1484.50,541.73 1484.82,530.86 1485.13,514.52 1485.45,503.38 1485.77,490.20 1486.08,480.85 1486.40,468.95 1486.72,462.37 1487.03,441.49 1487.35,436.97 1487.67,419.83 1487.98,415.79 1488.30,404.27 1488.62,392.42 1488.93,385.63 1489.25,378.79 1489.57,367.23 1489.88,362.22 1490.20,358.49 1490.52,357.26 1490.83,356.45 1491.15,354.29 1491.47,354.54 1491.78,354.33 1492.10,354.41 1492.42,360.90 1492.73,367.57 1493.05,372.90 1493.37,374.02 1493.68,385.23 1494.00,393.72 1494.32,403.06 1494.63,412.29 1494.95,424.43 1495.27,432.53 1495.58,445.25 1495.90,468.16 1496.22,472.00 1496.53,474.68 1496.85,499.40 1497.17,506.83 1497.48,515.30 1497.80,529.46 1498.12,535.75 1498.43,553.29 1498.75,562.15 1499.07,566.99 1499.38,575.78 1499.70,582.91 1500.02,583.00 1500.33,587.84 1500.65,591.41 1500.97,594.27 1501.28,592.65 1501.60,593.01 1501.92,592.86 1502.23,585.95 1502.55,582.07 1502.87,577.53 1503.18,569.23 1503.50,567.23 1503.82,555.99 1504.13,547.97 1504.45,532.47 1504.77,524.43 1505.08,508.53 1505.40,498.69 1505.72,492.76 1506.03,482.97 1506.35,466.19 1506.67,456.52 1506.98,444.34 1507.30,435.55 1507.62,419.44 1507.93,410.10 1508.25,399.48 1508.57,390.52 1508.88,385.74 1509.20,382.24 1509.52,369.76 1509.83,365.34 1510.15,360.60 1510.47,352.84 1510.78,353.92 1511.10,348.16 1511.42,352.44 1511.73,352.40 1512.05,355.61 1512.37,358.54 1512.68,369.70 1513.00,368.65 1513.32,378.63 1513.63,389.86 1513.95,393.90 1514.27,404.30 1514.58,411.74 1514.90,424.26 1515.22,436.68 1515.53,454.36 1515.85,456.30 1516.17,468.89 1516.48,483.04 1516.80,495.88 1517.12,505.25 1517.43,522.82 1517.75,528.92 1518.07,541.21 1518.38,553.85 1518.70,558.51 1519.02,566.48 1519.33,569.39 1519.65,577.64 1519.97,590.20 1520.28,595.05 1520.60,591.99 1520.92,593.81 1521.23,596.22 1521.55,596.81 1521.87,590.84 1522.18,590.40 1522.50,584.52 1522.82,574.28 1523.13,569.55 1523.45,564.97 1523.77,557.61 1524.08,545.51 1524.40,529.73 1524.72,525.86 1525.03,507.99 1525.35,504.04 1525.67,490.49 1525.98,475.78 1526.30,468.17 1526.62,453.72 1526.93,446.19 1527.25,428.67 1527.57,416.14 1527.88,411.08 1528.20,398.70 1528.52,391.36 1528.83,388.33 1529.15,366.19 1529.47,366.15 1529.78,360.21 1530.10,357.28 1530.42,354.81 1530.73,346.27 1531.05,358.17 1531.37,354.08 1531.68,356.06 1532.00,358.27 1532.32,359.55 1532.63,368.92 1532.95,376.92 1533.27,383.49 1533.58,386.82 1533.90,394.28 1534.22,404.41 1534.53,412.40 1534.85,429.70 1535.17,436.52 1535.48,449.15 1535.80,463.64 1536.12,477.43 1536.43,484.53 1536.75,501.09 1537.07,511.52 1537.38,524.80 1537.70,527.35 1538.02,542.91 1538.33,553.71 1538.65,561.61 1538.97,569.33 1539.28,575.21 1539.60,586.42 1539.92,589.51 1540.23,588.08 1540.55,588.78 1540.87,596.33 1541.18,592.99 1541.50,593.91 1541.82,596.68 1542.13,587.26 1542.45,584.95 1542.77,573.33 1543.08,569.83 1543.40,561.60 1543.72,557.29 1544.03,543.06 1544.35,539.26 1544.67,522.03 1544.98,507.35 1545.30,503.57 1545.62,485.51 1545.93,471.84 1546.25,464.65 1546.57,448.75 1546.88,440.13 1547.20,430.46 1547.52,424.07 1547.83,410.85 1548.15,402.32 1548.47,381.67 1548.78,379.89 1549.10,373.95 1549.42,371.25 1549.73,356.80 1550.05,361.41 1550.37,350.50 1550.68,349.95 1551.00,352.45 1551.32,355.30 1551.63,355.29 1551.95,362.16 1552.27,360.38 1552.58,362.54 1552.90,371.25 1553.22,378.09 1553.53,391.59 1553.85,397.63 1554.17,411.45 1554.48,420.18 1554.80,427.62 1555.12,433.70 1555.43,452.78 1555.75,464.84 1556.07,482.68 1556.38,488.44 1556.70,503.54 1557.02,516.58 1557.33,528.00 1557.65,533.75 1557.97,545.42 1558.28,551.51 1558.60,562.80 1558.92,569.75 1559.23,571.99 1559.55,579.64 1559.87,584.31 1560.18,585.60 1560.50,591.65 1560.82,596.36 1561.13,595.64 1561.45,596.62 1561.77,588.31 1562.08,586.92 1562.40,579.34 1562.72,572.48 1563.03,570.55 1563.35,559.69 1563.67,547.69 1563.98,541.76 1564.30,529.01 1564.62,521.63 1564.93,512.65 1565.25,498.85 1565.57,491.97 1565.88,472.12 1566.20,463.81 1566.52,446.26 1566.83,442.37 1567.15,426.92 1567.47,415.38 1567.78,406.71 1568.10,395.28 1568.42,389.84 1568.73,382.77 1569.05,376.69 1569.37,368.04 1569.68,363.77 1570.00,356.67 1570.32,355.75 1570.63,355.06 1570.95,354.91 1571.27,359.27 1571.58,356.64 1571.90,357.47 1572.22,367.10 1572.53,369.27 1572.85,372.92 1573.17,384.54 1573.48,390.21 1573.80,401.28 1574.12,402.43 1574.43,416.19 1574.75,427.91 1575.07,445.07 1575.38,452.80 1575.70,467.25 1576.02,477.68 1576.33,492.50 1576.65,502.07 1576.97,516.39 1577.28,524.25 1577.60,530.36 1577.92,549.85 1578.23,558.91 1578.55,561.76 1578.87,568.38 1579.18,578.47 1579.50,581.02 1579.82,585.91 1580.13,588.78 1580.45,588.33 1580.77,595.41 1581.08,591.10 1581.40,590.98 1581.72,591.00 1582.03,583.51 1582.35,584.05 1582.67,578.57 1582.98,563.69 1583.30,562.38 1583.62,544.97 1583.93,537.35 1584.25,531.84 1584.57,522.08 1584.88,514.88 1585.20,496.62 1585.52,489.49 1585.83,467.66 1586.15,465.60 1586.47,448.37 1586.78,445.28 1587.10,426.72 1587.42,410.77 1587.73,405.98 1588.05,397.59 1588.37,387.77 1588.68,377.25 1589.00,368.73 1589.32,366.24 1589.63,366.94 1589.95,355.97 1590.27,351.34 1590.58,345.87 1590.90,352.23 1591.22,353.22 1591.53,357.61 1591.85,357.01 1592.17,358.38 1592.48,372.48 1592.80,375.79 1593.12,386.84 1593.43,394.25 1593.75,402.00 1594.07,409.93 1594.38,424.65 1594.70,434.13 1595.02,440.55 1595.33,455.03 1595.65,466.42 1595.97,479.37 1596.28,493.14 1596.60,503.02 1596.92,514.16 1597.23,526.79 1597.55,534.11 1597.87,547.10 1598.18,553.45 1598.50,564.43 1598.82,569.61 1599.13,580.31 1599.45,585.29 1599.77,591.36 1600.08,587.16 1600.40,591.19 1600.72,592.82 1601.03,591.07 1601.35,593.84 1601.67,588.10 1601.98,585.95 1602.30,584.99 1602.62,573.87 1602.93,568.54 1603.25,553.34 1603.57,551.07 1603.88,540.95 1604.20,525.64 1604.52,517.76 1604.83,510.45 1605.15,493.92 1605.47,485.02 1605.78,465.41 1606.10,461.93 1606.42,449.10 1606.73,443.66 1607.05,426.07 1607.37,407.49 1607.68,403.52 1608.00,396.66 1608.32,384.18 1608.63,378.20 1608.95,370.63 1609.27,357.05 1609.58,353.81 1609.90,351.53 1610.22,348.92 1610.53,355.67 1610.85,358.85 1611.17,351.71 1611.48,355.16 1611.80,359.78 1612.12,364.96 1612.43,368.13 1612.75,375.38 1613.07,384.06 1613.38,391.96 1613.70,403.51 1614.02,414.15 1614.33,419.42 1614.65,435.69 1614.97,440.37 1615.28,456.37 1615.60,470.17 1615.92,478.93 1616.23,495.85 1616.55,506.63 1616.87,518.49 1617.18,528.39 1617.50,536.67 1617.82,542.11 1618.13,555.90 1618.45,568.94 1618.77,575.42 1619.08,584.68 1619.40,582.02 1619.72,585.61 1620.03,590.20 1620.35,591.83 1620.67,591.84 1620.98,591.48 1621.30,588.93 1621.62,587.17 1621.93,586.71 1622.25,575.47 1622.57,567.90 1622.88,569.74 1623.20,557.15 1623.52,550.84 1623.83,535.95 1624.15,527.93 1624.47,511.65 1624.78,501.17 1625.10,494.27 1625.42,482.36 1625.73,470.66 1626.05,455.10 1626.37,447.92 1626.68,432.15 1627.00,426.65 1627.32,408.48 1627.63,400.20 1627.95,395.93 1628.27,386.25 1628.58,375.79 1628.90,368.70 1629.22,372.75 1629.53,358.78 1629.85,351.35 1630.17,355.16 1630.48,356.93 1630.80,349.16 1631.12,353.54 1631.43,356.23 1631.75,358.64 1632.07,369.17 1632.38,373.36 1632.70,381.70 1633.02,389.60 1633.33,395.83 1633.65,407.62 1633.97,409.62 1634.28,423.83 1634.60,434.09 1634.92,453.39 1635.23,460.83 1635.55,472.64 1635.87,483.70 1636.18,494.73 1636.50,510.25 1636.82,521.94 1637.13,527.05 1637.45,533.35 1637.77,543.52 1638.08,559.67 1638.40,569.23 1638.72,573.30 1639.03,578.50 1639.35,579.51 1639.67,589.55 1639.98,593.85 1640.30,589.89 1640.62,595.68 1640.93,595.24 1641.25,588.90 1641.57,587.92 1641.88,586.20 1642.20,578.31 1642.52,572.27 1642.83,564.20 1643.15,557.40 1643.47,544.14 1643.78,537.09 1644.10,527.28 1644.42,511.09 1644.73,505.71 1645.05,488.75 1645.37,477.29 1645.68,467.97 1646.00,454.43 1646.32,447.86 1646.63,431.05 1646.95,423.90 1647.27,412.81 1647.58,399.43 1647.90,393.28 1648.22,382.24 1648.53,373.90 1648.85,365.45 1649.17,361.97 1649.48,355.65 1649.80,357.91 1650.12,354.69 1650.43,350.72 1650.75,349.43 1651.07,353.22 1651.38,358.95 1651.70,364.49 1652.02,369.12 1652.33,368.84 1652.65,382.35 1652.97,388.07 1653.28,394.29 1653.60,404.52 1653.92,418.32 1654.23,420.95 1654.55,437.87 1654.87,449.19 1655.18,459.47 1655.50,474.93 1655.82,483.87 1656.13,498.30 1656.45,512.21 1656.77,523.69 1657.08,530.41 1657.40,541.48 1657.72,551.79 1658.03,561.44 1658.35,568.68 1658.67,572.43 1658.98,577.42 1659.30,586.37 1659.62,588.52 1659.93,597.53 1660.25,596.73 1660.57,595.54 1660.88,595.13 1661.20,588.02 1661.52,593.08 1661.83,580.71 1662.15,574.50 1662.47,563.21 1662.78,563.80 1663.10,552.41 1663.42,539.97 1663.73,531.59 1664.05,526.64 1664.37,513.72 1664.68,504.59 1665.00,489.06 1665.32,475.20 1665.63,461.12 1665.95,451.60 1666.27,438.83 1666.58,426.89 1666.90,421.58 1667.22,406.58 1667.53,395.83 1667.85,390.25 1668.17,384.35 1668.48,373.64 1668.80,367.29 1669.12,360.36 1669.43,363.69 1669.75,356.34 1670.07,347.22 1670.38,348.75 1670.70,353.65 1671.02,355.80 1671.33,358.63 1671.65,364.81 1671.97,368.42 1672.28,373.38 1672.60,384.11 1672.92,388.85 1673.23,396.80 1673.55,411.23 1673.87,419.12 1674.18,433.40 1674.50,439.96 1674.82,451.14 1675.13,465.31 1675.45,475.56 1675.77,486.10 1676.08,497.56 1676.40,515.26 1676.72,523.39 1677.03,537.49 1677.35,548.97 1677.67,549.58 1677.98,558.97 1678.30,565.18 1678.62,573.47 1678.93,583.07 1679.25,585.58 1679.57,591.40 1679.88,588.02 1680.20,600.45 1680.52,592.09 1680.83,593.77 1681.15,587.52 1681.47,582.48 1681.78,583.34 1682.10,571.51 1682.42,565.55 1682.73,565.85 1683.05,546.90 1683.37,546.58 1683.68,536.97 1684.00,519.29 1684.32,513.11 1684.63,498.66 1684.95,487.61 1685.27,478.56 1685.58,458.60 1685.90,447.02 1686.22,439.56 1686.53,423.64 1686.85,417.50 1687.17,406.32 1687.48,398.29 1687.80,392.40 1688.12,381.32 1688.43,375.97 1688.75,365.65 1689.07,361.30 1689.38,359.46 1689.70,350.98 1690.02,352.03 1690.33,347.15 1690.65,354.55 1690.97,356.44 1691.28,360.58 1691.60,361.86 1691.92,368.39 1692.23,374.16 1692.55,376.34 1692.87,387.50 1693.18,400.90 1693.50,407.64 1693.82,420.14 1694.13,431.30 1694.45,442.47 1694.77,453.38 1695.08,463.60 1695.40,474.51 1695.72,489.44 1696.03,503.82 1696.35,512.92 1696.67,524.63 1696.98,535.49 1697.30,548.37 1697.62,554.41 1697.93,567.98 1698.25,566.27 1698.57,574.50 1698.88,580.05 1699.20,589.64 1699.52,589.46 1699.83,588.52 1700.15,594.04 1700.47,596.42 1700.78,592.13 1701.10,596.05 1701.42,582.65 1701.73,579.29 1702.05,578.82 1702.37,565.61 1702.68,556.38 1703.00,549.12 1703.32,539.51 1703.63,526.64 1703.95,519.81 1704.27,504.96 1704.58,498.17 1704.90,487.74 1705.22,474.63 1705.53,464.79 1705.85,448.55 1706.17,440.18 1706.48,425.63 1706.80,414.92 1707.12,400.67 1707.43,390.64 1707.75,388.77 1708.07,379.66 1708.38,372.59 1708.70,367.91 1709.02,355.62 1709.33,353.49 1709.65,355.17 1709.97,357.17 1710.28,354.62 1710.60,353.49 1710.92,350.91 1711.23,362.77 1711.55,358.93 1711.87,373.10 1712.18,374.26 1712.50,386.32 1712.82,392.52 1713.13,407.65 1713.45,408.59 1713.77,420.88 1714.08,435.21 1714.40,450.00 1714.72,455.59 1715.03,467.43 1715.35,483.76 1715.67,489.89 1715.98,503.51 1716.30,518.05 1716.62,528.12 1716.93,543.65 1717.25,543.97 1717.57,552.40 1717.88,564.30 1718.20,574.97 1718.52,581.05 1718.83,584.01 1719.15,590.09 1719.47,589.76 1719.78,595.27 1720.10,590.75 1720.42,589.52 1720.73,593.31 1721.05,591.22 1721.37,593.77 1721.68,579.73 1722.00,572.60 1722.32,569.47 1722.63,555.24 1722.95,551.74 1723.27,543.62 1723.58,527.27 1723.90,517.48 1724.22,513.74 1724.53,497.94 1724.85,487.80 1725.17,472.56 1725.48,459.34 1725.80,449.39 1726.12,435.92 1726.43,422.41 1726.75,415.31 1727.07,407.97 1727.38,397.60 1727.70,383.40 1728.02,372.89 1728.33,371.68 1728.65,364.14 1728.97,362.90 1729.28,358.53 1729.60,351.37 1729.92,354.47 1730.23,352.27 1730.55,353.49 1730.87,352.63 1731.18,358.83 1731.50,364.28 1731.82,370.66 1732.13,378.04 1732.45,381.02 1732.77,386.17 1733.08,406.70 1733.40,408.91 1733.72,425.64 1734.03,435.68 1734.35,446.30 1734.67,458.54 1734.98,470.32 1735.30,483.04 1735.62,487.77 1735.93,509.28 1736.25,518.32 1736.57,529.68 1736.88,537.24 1737.20,551.50 1737.52,556.73 1737.83,564.57 1738.15,566.38 1738.47,576.62 1738.78,584.01 1739.10,587.68 1739.42,585.48 1739.73,593.19 1740.05,595.57 1740.37,594.81 1740.68,592.29 1741.00,585.61 1741.32,587.18 1741.63,580.73 1741.95,572.82 1742.27,568.28 1742.58,555.38 1742.90,549.50 1743.22,537.07 1743.53,526.61 1743.85,512.72 1744.17,500.58 1744.48,496.65 1744.80,486.07 1745.12,473.58 1745.43,456.67 1745.75,444.67 1746.07,434.67 1746.38,423.59 1746.70,408.21 1747.02,400.00 1747.33,392.61 1747.65,382.82 1747.97,381.46 1748.28,366.67 1748.60,358.29 1748.92,359.40 1749.23,357.61 1749.55,350.26 1749.87,354.30 1750.18,352.57 1750.50,352.27 1750.82,357.00 1751.13,358.02 1751.45,370.66 1751.77,377.97 1752.08,375.29 1752.40,383.68 1752.72,393.26 1753.03,404.55 1753.35,413.39 1753.67,422.95 1753.98,438.92 1754.30,446.34 1754.62,461.31 1754.93,464.72 1755.25,481.90 1755.57,494.10 1755.88,503.59 1756.20,515.17 1756.52,526.07 1756.83,541.23 1757.15,548.53 1757.47,555.28 1757.78,565.36 1758.10,572.84 1758.42,581.07 1758.73,583.92 1759.05,584.34 1759.37,594.92 1759.68,597.07 1760.00,597.04 1760.32,597.35 1760.63,586.98 1760.95,582.05 1761.27,581.94 1761.58,577.80 1761.90,567.54 1762.22,561.13 1762.53,562.77 1762.85,547.06 1763.17,529.67 1763.48,527.66 1763.80,517.57 1764.12,505.84 1764.43,487.52 1764.75,481.58 1765.07,466.98 1765.38,452.66 1765.70,443.89 1766.02,432.85 1766.33,424.88 1766.65,414.85 1766.97,397.94 1767.28,395.75 1767.60,380.21 1767.92,372.12 1768.23,364.75 1768.55,364.21 1768.87,361.70 1769.18,355.56 1769.50,349.81 1769.82,351.08 1770.13,351.50 1770.45,354.72"/><text x="1410" y="285" style="font-size:17px;fill:#6e7079">振幅(mm)</text><text x="1843" y="490" style="font-size:16px;fill:#6e7079">时间</text></svg>
<svg class="abs" style="left:0;top:0" width="1920" height="1080" viewBox="0 0 1920 1080"><defs><clipPath id="cp"><rect x="960" y="695" width="830" height="280"/></clipPath></defs><line x1="965.5" y1="965.5" x2="1782.5" y2="965.5" stroke="#ececec" stroke-width="1"/><line x1="1369.5" y1="965.5" x2="1374.5" y2="965.5" stroke="#666" stroke-width="1"/><text x="955.5" y="969.0" text-anchor="end" style="font-size:14px;fill:#666">0</text><line x1="965.5" y1="920.5" x2="1782.5" y2="920.5" stroke="#ececec" stroke-width="1"/><line x1="1369.5" y1="920.5" x2="1374.5" y2="920.5" stroke="#666" stroke-width="1"/><text x="955.5" y="924.0" text-anchor="end" style="font-size:14px;fill:#666">0.02</text><line x1="965.5" y1="875.5" x2="1782.5" y2="875.5" stroke="#ececec" stroke-width="1"/><line x1="1369.5" y1="875.5" x2="1374.5" y2="875.5" stroke="#666" stroke-width="1"/><text x="955.5" y="879.0" text-anchor="end" style="font-size:14px;fill:#666">0.04</text><line x1="965.5" y1="830.5" x2="1782.5" y2="830.5" stroke="#ececec" stroke-width="1"/><line x1="1369.5" y1="830.5" x2="1374.5" y2="830.5" stroke="#666" stroke-width="1"/><text x="955.5" y="834.0" text-anchor="end" style="font-size:14px;fill:#666">0.06</text><line x1="965.5" y1="785.5" x2="1782.5" y2="785.5" stroke="#ececec" stroke-width="1"/><line x1="1369.5" y1="785.5" x2="1374.5" y2="785.5" stroke="#666" stroke-width="1"/><text x="955.5" y="789.0" text-anchor="end" style="font-size:14px;fill:#666">0.08</text><line x1="965.5" y1="740.5" x2="1782.5" y2="740.5" stroke="#ececec" stroke-width="1"/><line x1="1369.5" y1="740.5" x2="1374.5" y2="740.5" stroke="#666" stroke-width="1"/><text x="955.5" y="744.0" text-anchor="end" style="font-size:14px;fill:#666">0.1</text><line x1="965.5" y1="695.5" x2="1782.5" y2="695.5" stroke="#ececec" stroke-width="1"/><line x1="1369.5" y1="695.5" x2="1374.5" y2="695.5" stroke="#666" stroke-width="1"/><text x="955.5" y="699.0" text-anchor="end" style="font-size:14px;fill:#666">0.12</text><line x1="965.5" y1="695.5" x2="965.5" y2="965.5" stroke="#ececec" stroke-width="1"/><line x1="1054.5" y1="695.5" x2="1054.5" y2="965.5" stroke="#ececec" stroke-width="1"/><line x1="1214.5" y1="695.5" x2="1214.5" y2="965.5" stroke="#ececec" stroke-width="1"/><line x1="1533.5" y1="695.5" x2="1533.5" y2="965.5" stroke="#ececec" stroke-width="1"/><line x1="1693.5" y1="695.5" x2="1693.5" y2="965.5" stroke="#ececec" stroke-width="1"/><line x1="1782.5" y1="695.5" x2="1782.5" y2="965.5" stroke="#ececec" stroke-width="1"/><line x1="1374.5" y1="695.5" x2="1374.5" y2="965.5" stroke="#666" stroke-width="1"/><line x1="965.5" y1="965.5" x2="1782.5" y2="965.5" stroke="#666" stroke-width="1"/><line x1="965.5" y1="965.5" x2="965.5" y2="970.5" stroke="#666" stroke-width="1"/><line x1="1054.5" y1="965.5" x2="1054.5" y2="970.5" stroke="#666" stroke-width="1"/><text x="1054.5" y="984.5" text-anchor="middle" style="font-size:14px;fill:#666">-2000</text><line x1="1214.5" y1="965.5" x2="1214.5" y2="970.5" stroke="#666" stroke-width="1"/><text x="1214.5" y="984.5" text-anchor="middle" style="font-size:14px;fill:#666">-1000</text><line x1="1374.5" y1="965.5" x2="1374.5" y2="970.5" stroke="#666" stroke-width="1"/><text x="1374.5" y="984.5" text-anchor="middle" style="font-size:14px;fill:#666">0</text><line x1="1533.5" y1="965.5" x2="1533.5" y2="970.5" stroke="#666" stroke-width="1"/><text x="1533.5" y="984.5" text-anchor="middle" style="font-size:14px;fill:#666">1000</text><line x1="1693.5" y1="965.5" x2="1693.5" y2="970.5" stroke="#666" stroke-width="1"/><text x="1693.5" y="984.5" text-anchor="middle" style="font-size:14px;fill:#666">2000</text><line x1="1782.5" y1="965.5" x2="1782.5" y2="970.5" stroke="#666" stroke-width="1"/><polyline clip-path="url(#cp)" fill="none" stroke="#ff9900" stroke-width="1" points="965.50,943.00 967.10,943.00 969.09,943.00 971.08,943.00 973.08,943.00 975.07,943.00 977.07,943.00 979.06,943.00 981.06,943.00 983.05,943.00 985.05,943.00 987.04,943.00 989.04,943.00 991.03,943.00 993.03,943.00 995.02,943.00 997.02,943.00 999.01,943.00 1001.00,943.00 1003.00,943.00 1004.99,943.00 1006.99,943.00 1008.98,943.00 1010.98,943.00 1012.97,943.00 1014.97,943.00 1016.96,943.00 1018.96,943.00 1020.95,943.00 1022.95,943.00 1024.94,943.00 1026.93,943.00 1028.93,943.00 1030.92,943.00 1032.92,943.00 1034.91,943.00 1036.91,943.00 1038.90,943.00 1040.90,943.00 1042.89,943.00 1044.89,943.00 1046.88,943.00 1048.88,943.00 1050.87,943.00 1052.86,943.00 1054.86,943.00 1056.85,943.00 1058.85,943.00 1060.84,943.00 1062.84,943.00 1064.83,943.00 1066.83,943.00 1068.82,943.00 1070.82,943.00 1072.81,943.00 1074.81,943.00 1076.80,943.00 1078.79,943.00 1080.79,943.00 1082.78,943.00 1084.78,943.00 1086.77,943.00 1088.77,943.00 1090.76,943.00 1092.76,943.00 1094.75,943.00 1096.75,943.00 1098.74,943.00 1100.74,943.00 1102.73,943.00 1104.73,943.00 1106.72,943.00 1108.71,943.00 1110.71,943.00 1112.70,943.00 1114.70,943.00 1116.69,943.00 1118.69,943.00 1120.68,943.00 1122.68,943.00 1124.67,943.00 1126.67,943.00 1128.66,943.00 1130.66,943.00 1132.65,943.00 1134.64,943.00 1136.64,943.00 1138.63,943.00 1140.63,943.00 1142.62,943.00 1144.62,943.00 1146.61,943.00 1148.61,943.00 1150.60,943.00 1152.60,943.00 1154.59,943.00 1156.59,943.00 1158.58,943.00 1160.57,943.00 1162.57,943.00 1164.56,943.00 1166.56,943.00 1168.55,943.00 1170.55,943.00 1172.54,943.00 1174.54,943.00 1176.53,943.00 1178.53,943.00 1180.52,943.00 1182.52,943.00 1184.51,943.00 1186.50,943.00 1188.50,943.00 1190.49,943.00 1192.49,943.00 1194.48,943.00 1196.48,943.00 1198.47,943.00 1200.47,943.00 1202.46,943.00 1204.46,943.00 1206.45,943.00 1208.45,943.00 1210.44,943.00 1212.44,943.00 1214.43,943.00 1216.42,943.00 1218.42,943.00 1220.41,943.00 1222.41,943.00 1224.40,943.00 1226.40,943.00 1228.39,943.00 1230.39,943.00 1232.38,943.00 1234.38,943.00 1236.37,943.00 1238.37,943.00 1240.36,943.00 1242.35,943.00 1244.35,943.00 1246.34,943.00 1248.34,943.00 1250.33,943.00 1252.33,943.00 1254.32,943.00 1256.32,943.00 1258.31,943.00 1260.31,943.00 1262.30,943.00 1264.30,943.00 1266.29,943.00 1268.28,943.00 1270.28,943.00 1272.27,943.00 1274.27,943.00 1276.26,943.00 1278.26,943.00 1280.25,943.00 1282.25,943.00 1284.24,943.00 1286.24,943.00 1288.23,943.00 1290.23,943.00 1292.22,943.00 1294.21,943.00 1296.21,943.00 1298.20,943.00 1300.20,943.00 1302.19,943.00 1304.19,943.00 1306.18,943.00 1308.18,943.00 1310.17,943.00 1312.17,943.00 1314.16,943.00 1316.16,943.00 1318.15,943.00 1320.15,943.00 1322.14,943.00 1324.13,943.00 1326.13,943.00 1328.12,943.00 1330.12,943.00 1332.11,943.00 1334.11,943.00 1336.10,943.00 1338.10,943.00 1340.09,943.00 1342.09,943.00 1344.08,943.00 1346.08,943.00 1348.07,943.00 1350.06,898.00 1352.06,943.00 1354.05,943.00 1356.05,943.00 1358.04,830.50 1360.04,943.00 1362.03,943.00 1364.03,943.00 1366.02,691.00 1368.02,943.00 1370.01,943.00 1372.01,943.00 1374.00,943.00 1375.99,943.00 1377.99,943.00 1379.98,943.00 1381.98,691.00 1383.97,943.00 1385.97,943.00 1387.96,943.00 1389.96,830.50 1391.95,943.00 1393.95,943.00 1395.94,943.00 1397.94,898.00 1399.93,943.00 1401.92,943.00 1403.92,943.00 1405.91,943.00 1407.91,943.00 1409.90,943.00 1411.90,943.00 1413.89,943.00 1415.89,943.00 1417.88,943.00 1419.88,943.00 1421.87,943.00 1423.87,943.00 1425.86,943.00 1427.85,943.00 1429.85,943.00 1431.84,943.00 1433.84,943.00 1435.83,943.00 1437.83,943.00 1439.82,943.00 1441.82,943.00 1443.81,943.00 1445.81,943.00 1447.80,943.00 1449.80,943.00 1451.79,943.00 1453.79,943.00 1455.78,943.00 1457.77,943.00 1459.77,943.00 1461.76,943.00 1463.76,943.00 1465.75,943.00 1467.75,943.00 1469.74,943.00 1471.74,943.00 1473.73,943.00 1475.73,943.00 1477.72,943.00 1479.72,943.00 1481.71,943.00 1483.70,943.00 1485.70,943.00 1487.69,943.00 1489.69,943.00 1491.68,943.00 1493.68,943.00 1495.67,943.00 1497.67,943.00 1499.66,943.00 1501.66,943.00 1503.65,943.00 1505.65,943.00 1507.64,943.00 1509.63,943.00 1511.63,943.00 1513.62,943.00 1515.62,943.00 1517.61,943.00 1519.61,943.00 1521.60,943.00 1523.60,943.00 1525.59,943.00 1527.59,943.00 1529.58,943.00 1531.58,943.00 1533.57,943.00 1535.56,943.00 1537.56,943.00 1539.55,943.00 1541.55,943.00 1543.54,943.00 1545.54,943.00 1547.53,943.00 1549.53,943.00 1551.52,943.00 1553.52,943.00 1555.51,943.00 1557.51,943.00 1559.50,943.00 1561.50,943.00 1563.49,943.00 1565.48,943.00 1567.48,943.00 1569.47,943.00 1571.47,943.00 1573.46,943.00 1575.46,943.00 1577.45,943.00 1579.45,943.00 1581.44,943.00 1583.44,943.00 1585.43,943.00 1587.43,943.00 1589.42,943.00 1591.41,943.00 1593.41,943.00 1595.40,943.00 1597.40,943.00 1599.39,943.00 1601.39,943.00 1603.38,943.00 1605.38,943.00 1607.37,943.00 1609.37,943.00 1611.36,943.00 1613.36,943.00 1615.35,943.00 1617.34,943.00 1619.34,943.00 1621.33,943.00 1623.33,943.00 1625.32,943.00 1627.32,943.00 1629.31,943.00 1631.31,943.00 1633.30,943.00 1635.30,943.00 1637.29,943.00 1639.29,943.00 1641.28,943.00 1643.27,943.00 1645.27,943.00 1647.26,943.00 1649.26,943.00 1651.25,943.00 1653.25,943.00 1655.24,943.00 1657.24,943.00 1659.23,943.00 1661.23,943.00 1663.22,943.00 1665.22,943.00 1667.21,943.00 1669.21,943.00 1671.20,943.00 1673.19,943.00 1675.19,943.00 1677.18,943.00 1679.18,943.00 1681.17,943.00 1683.17,943.00 1685.16,943.00 1687.16,943.00 1689.15,943.00 1691.15,943.00 1693.14,943.00 1695.14,943.00 1697.13,943.00 1699.12,943.00 1701.12,943.00 1703.11,943.00 1705.11,943.00 1707.10,943.00 1709.10,943.00 1711.09,943.00 1713.09,943.00 1715.08,943.00 1717.08,943.00 1719.07,943.00 1721.07,943.00 1723.06,943.00 1725.05,943.00 1727.05,943.00 1729.04,943.00 1731.04,943.00 1733.03,943.00 1735.03,943.00 1737.02,943.00 1739.02,943.00 1741.01,943.00 1743.01,943.00 1745.00,943.00 1747.00,943.00 1748.99,943.00 1750.98,943.00 1752.98,943.00 1754.97,943.00 1756.97,943.00 1758.96,943.00 1760.96,943.00 1762.95,943.00 1764.95,943.00 1766.94,943.00 1768.94,943.00 1770.93,943.00 1772.93,943.00 1774.92,943.00 1776.92,943.00"/><text x="1798" y="969" style="font-size:16px;fill:#666">频率(Hz)</text></svg>
</body></html>
